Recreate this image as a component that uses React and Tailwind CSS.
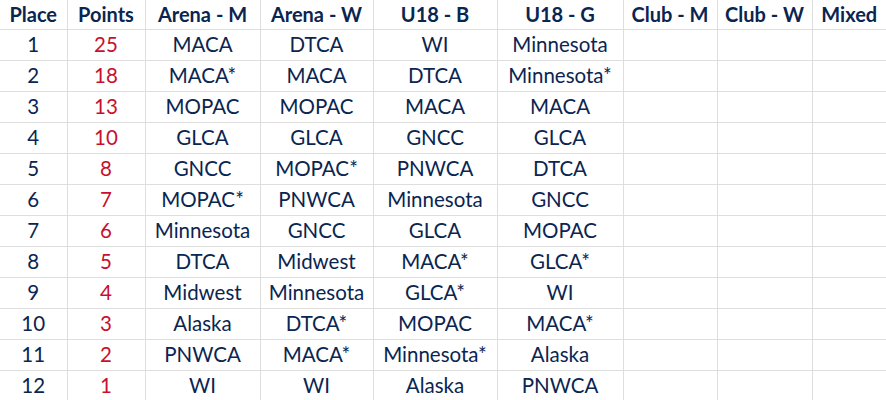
import React from "react";

const headers = ["Place", "Points", "Arena - M", "Arena - W", "U18 - B", "U18 - G", "Club - M", "Club - W", "Mixed"];
const widths = ["w-[67px]", "w-[78px]", "w-[115px]", "w-[113px]", "w-[124px]", "w-[126px]", "w-[94px]", "w-[95px]", "w-[74px]"];

const rows = [
  [1, 25, "MACA", "DTCA", "WI", "Minnesota"],
  [2, 18, "MACA*", "MACA", "DTCA", "Minnesota*"],
  [3, 13, "MOPAC", "MOPAC", "MACA", "MACA"],
  [4, 10, "GLCA", "GLCA", "GNCC", "GLCA"],
  [5, 8, "GNCC", "MOPAC*", "PNWCA", "DTCA"],
  [6, 7, "MOPAC*", "PNWCA", "Minnesota", "GNCC"],
  [7, 6, "Minnesota", "GNCC", "GLCA", "MOPAC"],
  [8, 5, "DTCA", "Midwest", "MACA*", "GLCA*"],
  [9, 4, "Midwest", "Minnesota", "GLCA*", "WI"],
  [10, 3, "Alaska", "DTCA*", "MOPAC", "MACA*"],
  [11, 2, "PNWCA", "MACA*", "Minnesota*", "Alaska"],
  [12, 1, "WI", "WI", "Alaska", "PNWCA"],
];

export default function App() {
  return (
    <div className="w-[886px] h-[400px] overflow-hidden bg-white font-['Lato','Liberation_Sans',sans-serif] text-[#0a2550]">
      <table className="table-fixed border-collapse w-[886px]">
        <colgroup>
          {widths.map((w, i) => (
            <col key={i} className={w} />
          ))}
        </colgroup>
        <thead>
          <tr className="h-[29px]">
            {headers.map((h, i) => (
              <th
                key={h}
                className={`p-0 text-center text-[20px] font-bold leading-none border-b border-[#dedede] ${i < headers.length - 1 ? "border-r" : ""}`}
              >
                {h}
              </th>
            ))}
          </tr>
        </thead>
        <tbody>
          {rows.map((r) => (
            <tr key={r[0]} className="h-[31px]">
              {[...r, "", "", ""].map((c, i) => (
                <td
                  key={i}
                  className={`p-0 text-center text-[20.5px] leading-none border-b border-[#dedede] ${i < 8 ? "border-r" : ""} ${i === 1 ? "text-[#c8102e]" : ""}`}
                >
                  {c}
                </td>
              ))}
            </tr>
          ))}
        </tbody>
      </table>
    </div>
  );
}
